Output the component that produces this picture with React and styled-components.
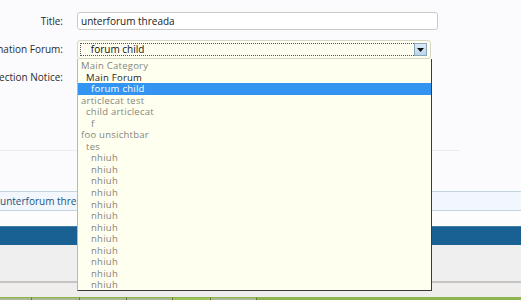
import React from "react";
import styled, { createGlobalStyle } from "styled-components";

const GlobalStyle = createGlobalStyle`
  html, body {
    margin: 0;
    padding: 0;
    background: #fbfbfd;
  }
  body {
    font-family: "Open Sans", "Noto Sans", sans-serif;
    overflow: hidden;
  }
`;

const options = [
  { label: "Main Category", level: 0, tone: "group" },
  { label: "Main Forum", level: 1, tone: "dark" },
  { label: "forum child", level: 2, tone: "dark", selected: true },
  { label: "articlecat test", level: 0, tone: "group" },
  { label: "child articlecat", level: 1, tone: "group" },
  { label: "f", level: 2, tone: "group" },
  { label: "foo unsichtbar", level: 0, tone: "group" },
  { label: "tes", level: 1, tone: "group" },
  ...Array.from({ length: 12 }, () => ({ label: "nhiuh", level: 2, tone: "group" })),
];

const tabs = [32, 48, 47, 46, 38, 46];

const App = () => {
  return (
    <Page>
      <GlobalStyle />
      <FormArea>
        <FormRow>
          <Label>Title:</Label>
          <TextInput>unterforum threada</TextInput>
        </FormRow>
        <FormRow>
          <Label>Destination Forum:</Label>
          <SelectWrap>
            <SelectBox>
              <SelectFocus>&nbsp;&nbsp;&nbsp;forum child</SelectFocus>
              <SelectButton>
                <svg width="7" height="4" viewBox="0 0 7 4">
                  <path d="M0 0 L7 0 L3.5 4 Z" fill="#111" />
                </svg>
              </SelectButton>
            </SelectBox>
            <DropList>
              {options.map((opt, idx) => (
                <Option key={idx} level={opt.level} tone={opt.tone} selected={opt.selected}>
                  {opt.label}
                </Option>
              ))}
            </DropList>
          </SelectWrap>
        </FormRow>
        <FormRow>
          <Label>Redirection Notice:</Label>
        </FormRow>
      </FormArea>

      <Divider />

      <ThreadRow>
        <ThreadLink>unterforum threada</ThreadLink>
      </ThreadRow>
      <Spacer />
      <BlueBar />
      <GrayBlock />
      <FootStrip />
      <TabStrip>
        {tabs.map((w, idx) => (
          <Tab key={idx} style={{ width: w }} active={idx === 4} />
        ))}
        <TabRest />
      </TabStrip>
    </Page>
  );
};

export default App;

const Page = styled.div`
  width: 521px;
  height: 300px;
  overflow: hidden;
  display: flex;
  flex-direction: column;
`;

//FormArea
const FormArea = styled.div`
  padding-top: 12px;
  height: 138px;
  display: flex;
  flex-direction: column;
  gap: 10px;
`;

const FormRow = styled.div`
  display: flex;
  align-items: flex-start;
  gap: 14px;
  height: 18px;
`;

const Label = styled.div`
  width: 63px;
  flex-shrink: 0;
  display: flex;
  justify-content: flex-end;
  white-space: nowrap;
  font-size: 10px;
  line-height: 18px;
  color: #2b2b2b;
`;

const TextInput = styled.div`
  box-sizing: border-box;
  width: 361px;
  height: 18px;
  border: 1px solid #cacaca;
  border-radius: 3px;
  background: #fff;
  padding-left: 3px;
  font-size: 10px;
  line-height: 16px;
  color: #222;
`;

//SelectBox
const SelectWrap = styled.div`
  position: relative;
  width: 354px;
  height: 18px;
`;

const SelectBox = styled.div`
  box-sizing: border-box;
  width: 354px;
  height: 19px;
  border: 1px solid #d6d6c4;
  border-radius: 3px;
  background: #fefef0;
  padding: 2px;
  display: flex;
  align-items: stretch;
`;

const SelectFocus = styled.div`
  flex: 1;
  border: 1px dotted #555;
  border-right: none;
  font-size: 10px;
  line-height: 11px;
  color: #111;
  padding-left: 2px;
  white-space: pre;
`;

const SelectButton = styled.div`
  box-sizing: border-box;
  width: 13px;
  margin-right: 1px;
  border: 1px solid #8aa4b8;
  background: linear-gradient(#dcebf7, #bcd6ec);
  display: flex;
  align-items: center;
  justify-content: center;
`;

const DropList = styled.div`
  position: absolute;
  left: 0;
  top: 19px;
  box-sizing: border-box;
  width: 355px;
  height: 232px;
  background: #fffff0;
  border-left: 1px solid #b8b8b0;
  border-right: 1px solid #3a3a3a;
  border-bottom: 1px solid #3a3a3a;
  padding-top: 1px;
  z-index: 5;
  overflow: hidden;
`;

const Option = styled.div`
  height: 11.55px;
  font-size: 9.5px;
  letter-spacing: 0.25px;
  line-height: 11.5px;
  padding-left: ${(props) => 3 + props.level * 5}px;
  white-space: nowrap;
  color: ${(props) =>
    props.selected ? "#fff" : props.tone === "dark" ? "#1e1e1e" : "#85857d"};
  background: ${(props) => (props.selected ? "#3494f2" : "transparent")};
`;

//Lower page
const Divider = styled.div`
  width: 460px;
  height: 1px;
  background: #ececf0;
`;

const ThreadRow = styled.div`
  margin-top: 40px;
  height: 18px;
  border-top: 1px solid #c3d6de;
  border-bottom: 1px solid #c3d6de;
  background: #f1f7fc;
  display: flex;
  align-items: center;
`;

const ThreadLink = styled.span`
  font-size: 10px;
  color: #24537f;
  white-space: nowrap;
`;

const Spacer = styled.div`
  height: 15px;
  background: #fdfdfe;
`;

const BlueBar = styled.div`
  height: 18px;
  background: #186192;
  border-top: 1px solid #3f7fae;
`;

const GrayBlock = styled.div`
  height: 36px;
  background: #efefef;
  border-bottom: 2px solid #c4c4c4;
`;

const FootStrip = styled.div`
  height: 14px;
  background: #efeeec;
`;

const TabStrip = styled.div`
  height: 3px;
  display: flex;
  background: #8db44f;
`;

const Tab = styled.div`
  height: 3px;
  box-sizing: border-box;
  border-top: 1px solid #8db44f;
  border-right: 1px solid #5f7a34;
  background: ${(props) => (props.active ? "#9cc45a" : "#aab894")};
`;

const TabRest = styled.div`
  flex: 1;
  background: #8db44f;
`;
